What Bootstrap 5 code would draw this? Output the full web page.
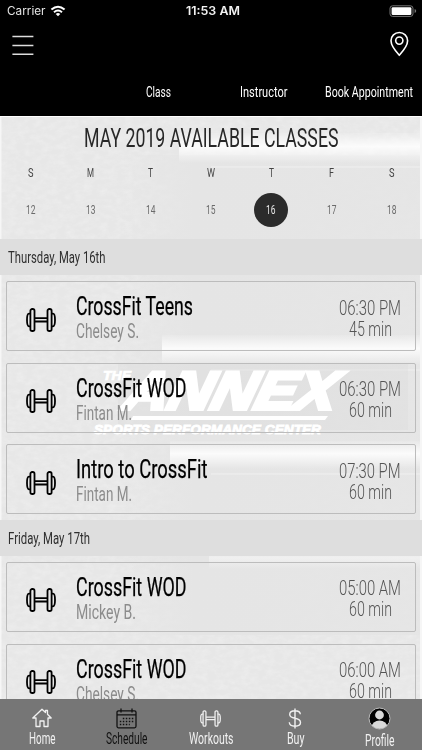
<!DOCTYPE html>
<html lang="en">
<head>
<meta charset="utf-8">
<meta name="viewport" content="width=device-width, initial-scale=1">
<title>Class Schedule</title>
<link rel="stylesheet" href="https://cdn.jsdelivr.net/npm/bootstrap@5.3.0/dist/css/bootstrap.min.css">
<style>
html,body{height:100%;overflow:hidden}
body{font-family:Roboto,"Liberation Sans",sans-serif;background:#e8e8e8}
.phone{height:750px;width:422px}
.fit{display:inline-block;white-space:nowrap;text-align:left}
.status{height:22px;font-family:Inter,sans-serif;font-size:11.5px;line-height:22px;color:#e4e4e4;padding:0 5px 0 7px;display:grid;grid-template-columns:1fr auto 1fr}
.clock{font-weight:600;margin-left:2px;color:#f2f2f2}
.toprow{height:44px;padding:0 12px}
.tabs-row{height:50px;padding:2px 9.5px 0 146px;font-size:15px;color:#fff}
.tabs-row .g1{margin-right:69px}.tabs-row .g2{margin-right:37.5px}
.backdrop{inset:0;width:422px;height:583px}
.month{height:44px;line-height:44px;font-size:26px;color:#272727}
.week{padding:0 .5px}
.week>div{width:60.15px}
.dow{height:27px;line-height:27px;font-size:12px;color:#444}
.dates{height:52px;padding-bottom:6px;font-size:12.5px;color:#6b6b6b}
.today{width:34px;height:34px;background:#2b2b2b;color:#e8e8e8}
.dayband{height:36px;line-height:37px;padding-left:8px;background:#dedede;color:#2f2f2f;font-size:17px}
.group{padding:6px 6px 5.6px;gap:11.7px}
.slot{height:70px;border:1px solid #bcbcbc;border-radius:2px;padding:0 14px 0 19px}
.slot .dumb{width:30px;height:24px;margin-top:25.5px;color:#000}
.slot .info{margin-left:20px;padding-top:12px}
.name{font-size:25px;line-height:25px;height:26px;color:#000;-webkit-text-stroke:.25px #000}
.coach{font-size:20.5px;line-height:23px;height:23px;color:#8c8c8c}
.when{padding-top:15.5px;width:62px;font-size:20.5px;line-height:21px;color:#555;font-weight:300}
.when div{height:21px}
.bottom{height:51px;background:#767676;color:#f1f1f1;font-size:16px}
.bottom>div{width:84.4px}
.bottom .ico{height:28px;margin-top:5px}
.bottom .lab{height:16px;line-height:16px;margin-top:-1px}
.bottom .low{margin-top:1px}
.bottom .on{color:#111}
</style>
<script src="https://cdn.jsdelivr.net/npm/bootstrap@5.3.0/dist/js/bootstrap.bundle.min.js"></script>
</head>
<body>
<svg width="0" height="0" class="position-absolute">
  <symbol id="dumbbell" viewBox="0 0 30 24">
    <g fill="none" stroke="currentColor" stroke-width="1.8" stroke-linejoin="round">
      <path d="M4.600 5.700H3Q1 5.700 1 12t2 6.300h1.600"/>
      <rect x="4.400" y="1" width="4.100" height="22" rx="1.800"/>
      <path d="M8.500 10.200h13M8.500 13.500h13"/>
      <rect x="21.500" y="1" width="4.100" height="22" rx="1.800"/>
      <path d="M25.400 5.700H27Q29 5.700 29 12t-2 6.300h-1.600"/>
    </g>
  </symbol>
</svg>
<div class="phone d-flex flex-column overflow-hidden">
  <header class="bg-black text-white flex-shrink-0">
    <div class="status">
      <div class="d-flex align-items-center"><span class="fit" data-w="38.5">Carrier</span>
        <svg class="ms-1" width="16" height="12" viewBox="0 0 16 12" fill="none" stroke="#fff" stroke-width="2"><path d="M1.400 4.600Q8-1.200 14.600 4.600M4 7.300Q8 3.800 12 7.300"/><path d="M8 11.200L5.700 9Q8 7.200 10.300 9z" fill="#fff" stroke="none"/></svg>
      </div>
      <span class="fit clock" data-w="54">11:53 AM</span>
      <div class="d-flex align-items-center justify-content-end"><svg width="28" height="12" viewBox="0 0 28 12"><rect x="1" y=".8" width="23" height="10.600" rx="2.600" fill="none" stroke="#777"/><rect x="2.600" y="2.200" width="19.800" height="7.800" rx="1.300" fill="#fff"/><path d="M25.600 4q1.600.4 1.600 2t-1.600 2z" fill="#777"/></svg></div>
    </div>
    <div class="toprow d-flex justify-content-between align-items-center">
      <svg width="22" height="22" viewBox="0 0 22 22" stroke="#ddd" stroke-width="1.500"><path d="M.4 3.500h21M.4 12.500h21M.4 21.200h21"/></svg>
      <svg width="21" height="26" viewBox="0 0 21 26" fill="none" stroke="#fff" stroke-width="1.600"><path d="M10.300 24.200Q2 15.300 2 9.800a8.300 8.300 0 0 1 16.600 0q0 5.500-8.300 14.400z"/><circle cx="10.300" cy="9.600" r="3.600"/></svg>
    </div>
    <nav class="tabs-row d-flex align-items-center"><span class="fit g1" data-w="25">Class</span><span class="fit g2" data-w="47.5">Instructor</span><span class="fit" data-w="88">Book Appointment</span></nav>
  </header>
  <main class="position-relative overflow-hidden flex-grow-1">
    <svg class="backdrop position-absolute" viewBox="0 116 422 583">
      <defs>
        <filter id="grain" x="0" y="0" width="100%" height="100%"><feTurbulence type="fractalNoise" baseFrequency=".12 .2" numOctaves="3" seed="4"/><feColorMatrix values="0 0 0 0 1  0 0 0 0 1  0 0 0 0 1  .9 0 0 0 -.3"/></filter>
        <linearGradient id="glow" x2="0" y2="1"><stop offset="0" stop-color="#fff" stop-opacity=".1"/><stop offset=".45" stop-color="#fff" stop-opacity=".85"/><stop offset="1" stop-color="#fff" stop-opacity="0"/></linearGradient>
        <linearGradient id="side"><stop offset="0" stop-color="#e5e5e5" stop-opacity="0"/><stop offset=".25" stop-color="#e5e5e5"/><stop offset="1" stop-color="#e5e5e5" stop-opacity=".8"/></linearGradient>
      </defs>
      <rect y="116" width="422" height="583" fill="#e7e7e7"/>
      <rect y="116" width="422" height="583" filter="url(#grain)" opacity=".45"/>
      <rect x="120" y="155" width="300" height="480" fill="url(#side)"/>
      <rect x="179" y="133" width="243" height="30" fill="url(#glow)"/>
      <rect x="162" y="335" width="260" height="30" fill="url(#glow)"/>
      <rect x="170" y="441" width="252" height="28" fill="url(#glow)"/>
      <rect x="209" y="549" width="213" height="20" fill="url(#glow)" opacity=".5"/>
      <path d="M211 167h211M211 370h211M211 474h211" stroke="#f0f0f0"/>
      <path d="M.5 116v583M421 116v583" stroke="#f6f6f6" stroke-width="2"/>
      <rect y="116" width="422" height="1" fill="#fff"/>
      <path d="M118 364h290v66H118z" fill="#d9d9d9" opacity=".35"/>
      <g fill="#fff" font-family="Liberation Sans,sans-serif" font-weight="700" font-style="italic">
        <text x="103" y="380" font-size="12" textLength="28" lengthAdjust="spacingAndGlyphs" stroke="#fff" stroke-width=".7">THE</text>
        <g transform="translate(122 409) skewX(-14)"><text x="0" y="0" font-size="53" textLength="211" lengthAdjust="spacingAndGlyphs" stroke="#fff" stroke-width="4">ANNEX</text></g>
        <text x="94" y="434.300" font-size="12.500" textLength="227" lengthAdjust="spacingAndGlyphs" stroke="#fff" stroke-width=".8">SPORTS PERFORMANCE CENTER</text>
      </g>
      <path d="M133 416h195l-3 4H131z" fill="#fff"/>
    </svg>
    <div class="position-relative">
      <div class="month text-center"><span class="fit" data-w="254.500">MAY 2019 AVAILABLE CLASSES</span></div>
      <div class="week dow d-flex text-center"><div><span class="fit" data-w="5.500">S</span></div><div><span class="fit" data-w="7">M</span></div><div><span class="fit" data-w="5">T</span></div><div><span class="fit" data-w="8">W</span></div><div><span class="fit" data-w="5">T</span></div><div><span class="fit" data-w="5">F</span></div><div><span class="fit" data-w="5.500">S</span></div></div>
      <div class="week dates d-flex"><div class="d-flex align-items-center justify-content-center"><span class="fit" data-w="9.500">12</span></div><div class="d-flex align-items-center justify-content-center"><span class="fit" data-w="9.500">13</span></div><div class="d-flex align-items-center justify-content-center"><span class="fit" data-w="9.500">14</span></div><div class="d-flex align-items-center justify-content-center"><span class="fit" data-w="9.500">15</span></div><div class="d-flex align-items-center justify-content-center"><div class="today rounded-circle d-flex align-items-center justify-content-center"><span class="fit" data-w="9.500">16</span></div></div><div class="d-flex align-items-center justify-content-center"><span class="fit" data-w="9.500">17</span></div><div class="d-flex align-items-center justify-content-center"><span class="fit" data-w="9.500">18</span></div></div>
      <div class="dayband"><span class="fit" data-w="97.500">Thursday, May 16th</span></div>
      <section class="group d-flex flex-column">
        <article class="slot d-flex"><svg class="dumb"><use href="#dumbbell"/></svg><div class="info"><div class="name"><span class="fit" data-w="117">CrossFit Teens</span></div><div class="coach"><span class="fit" data-w="63">Chelsey S.</span></div></div><div class="when ms-auto text-center"><div><span class="fit" data-w="62">06:30 PM</span></div><div><span class="fit" data-w="43">45 min</span></div></div></article>
        <article class="slot d-flex"><svg class="dumb"><use href="#dumbbell"/></svg><div class="info"><div class="name"><span class="fit" data-w="110.500">CrossFit WOD</span></div><div class="coach"><span class="fit" data-w="56">Fintan M.</span></div></div><div class="when ms-auto text-center"><div><span class="fit" data-w="62">06:30 PM</span></div><div><span class="fit" data-w="43">60 min</span></div></div></article>
        <article class="slot d-flex"><svg class="dumb"><use href="#dumbbell"/></svg><div class="info"><div class="name"><span class="fit" data-w="131.500">Intro to CrossFit</span></div><div class="coach"><span class="fit" data-w="56">Fintan M.</span></div></div><div class="when ms-auto text-center"><div><span class="fit" data-w="61.500">07:30 PM</span></div><div><span class="fit" data-w="43">60 min</span></div></div></article>
      </section>
      <div class="dayband"><span class="fit" data-w="82">Friday, May 17th</span></div>
      <section class="group d-flex flex-column">
        <article class="slot d-flex"><svg class="dumb"><use href="#dumbbell"/></svg><div class="info"><div class="name"><span class="fit" data-w="110.500">CrossFit WOD</span></div><div class="coach"><span class="fit" data-w="60">Mickey B.</span></div></div><div class="when ms-auto text-center"><div><span class="fit" data-w="62">05:00 AM</span></div><div><span class="fit" data-w="43">60 min</span></div></div></article>
        <article class="slot d-flex"><svg class="dumb"><use href="#dumbbell"/></svg><div class="info"><div class="name"><span class="fit" data-w="110.500">CrossFit WOD</span></div><div class="coach"><span class="fit" data-w="63">Chelsey S.</span></div></div><div class="when ms-auto text-center"><div><span class="fit" data-w="62">06:00 AM</span></div><div><span class="fit" data-w="43">60 min</span></div></div></article>
      </section>
    </div>
  </main>
  <footer class="bottom d-flex text-center flex-shrink-0">
    <div><div class="ico d-flex align-items-center justify-content-center"><svg width="20" height="20" viewBox="0 0 20 20" fill="none" stroke="currentColor" stroke-width="1.300" stroke-linejoin="round"><path d="M10 1.200L.8 10H4v8.500h4v-5.500h4v5.500h4V10h3.200L15.500 6.200V2.500h-2v2z"/></svg></div><div class="lab"><span class="fit" data-w="26.500">Home</span></div></div>
    <div class="on"><div class="ico d-flex align-items-center justify-content-center"><svg width="21" height="21" viewBox="0 0 21 21" fill="none" stroke="currentColor" stroke-width="1.300"><rect x="1" y="2.800" width="19" height="17" rx="1.500"/><path d="M1 6.800h19M5 .5v4M16 .5v4"/><path d="M6.800 10.400h11M3.800 13.400h14M3.800 16.400h10" stroke-width="1.500" stroke-dasharray="1.500 1.500"/></svg></div><div class="lab"><span class="fit" data-w="41.500">Schedule</span></div></div>
    <div><div class="ico d-flex align-items-center justify-content-center"><svg width="21" height="17"><use href="#dumbbell"/></svg></div><div class="lab"><span class="fit" data-w="44.500">Workouts</span></div></div>
    <div><div class="ico d-flex align-items-center justify-content-center"><svg width="14" height="21" viewBox="0 0 14 21" fill="none" stroke="currentColor" stroke-width="1.400"><path d="M7 .5v20M12.300 6.200Q12 2.800 7 2.800T1.700 6.300Q1.700 9.500 7 10.300t5.500 4.200Q12.500 18.200 7 18.200T1.300 14.300"/></svg></div><div class="lab"><span class="fit" data-w="17.500">Buy</span></div></div>
    <div><div class="ico d-flex align-items-center justify-content-center"><svg width="23" height="23" viewBox="0 0 23 23"><defs><clipPath id="face"><circle cx="11.500" cy="11.500" r="10.500"/></clipPath></defs><circle cx="11.500" cy="11.500" r="10.500" fill="#000"/><g clip-path="url(#face)" fill="#d8d8d8"><circle cx="11.500" cy="8" r="4.400"/><ellipse cx="11.500" cy="20.500" rx="8" ry="7"/></g><circle cx="11.500" cy="11.500" r="10.500" fill="none" stroke="#bbb"/></svg></div><div class="lab low"><span class="fit" data-w="29.500">Profile</span></div></div>
  </footer>
</div>
<script>
document.querySelectorAll('.fit').forEach(function(el){
  var target = parseFloat(el.dataset.w);
  var natural = el.getBoundingClientRect().width;
  el.style.width = target + 'px';
  var inner = document.createElement('span');
  inner.className = 'd-inline-block';
  inner.style.transformOrigin = '0 50%';
  inner.style.transform = 'scaleX(' + target / natural + ')';
  inner.textContent = el.textContent;
  el.textContent = '';
  el.appendChild(inner);
});
</script>
</body>
</html>
